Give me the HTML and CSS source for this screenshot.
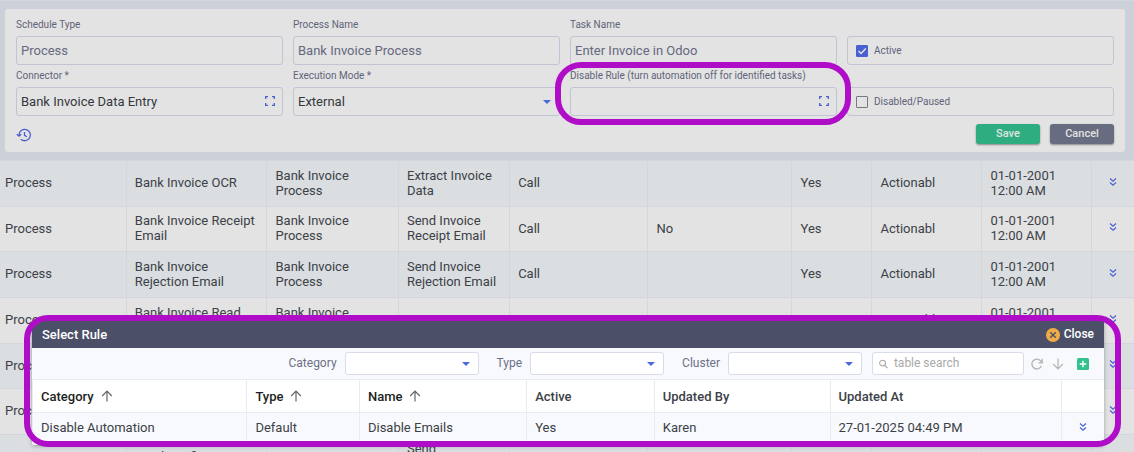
FILE: index.html
```html
<!DOCTYPE html>
<html lang="en">
<head>
<meta charset="utf-8">
<title>Schedules</title>
<link rel="stylesheet" href="styles.css">
</head>
<body>
<svg class="sprite" aria-hidden="true">
  <symbol id="down2" viewBox="0 0 10 10"><path d="M2 1.5 5 4.2 8 1.5M2 5.5 5 8.2 8 5.5" fill="none" stroke="currentColor" stroke-width="1.2"/></symbol>
  <symbol id="expand" viewBox="0 0 12 12"><path d="M1.7 4V1.7H4M8 1.7h2.3V4M10.3 8v2.3H8M4 10.3H1.7V8" fill="none" stroke="currentColor" stroke-width="1.3"/></symbol>
  <symbol id="up" viewBox="0 0 12 12"><path d="M6 11.5V1.5M1.2 6 6 1.2 10.8 6" fill="none" stroke="currentColor" stroke-width="1.2"/></symbol>
</svg>
<main class="page">
  <form class="panel">
    <div class="fields">
      <div class="field"><label for="type">Schedule Type</label><input id="type" class="box" value="Process" readonly></div>
      <div class="field"><label for="process">Process Name</label><input id="process" class="box" value="Bank Invoice Process" readonly></div>
      <div class="field"><label for="task">Task Name</label><input id="task" class="box" value="Enter Invoice in Odoo" readonly></div>
      <div class="field"><label class="box check"><input type="checkbox" checked>Active</label></div>
      <div class="field"><label for="connector">Connector *</label><div class="wrap"><input id="connector" class="box dark" value="Bank Invoice Data Entry"><button type="button" class="icon open" aria-label="Choose connector"><svg width="12" height="12"><use href="#expand"/></svg></button></div></div>
      <div class="field"><label for="mode">Execution Mode *</label><select id="mode" class="box dark drop"><option>External</option></select></div>
      <div class="field marked"><label for="rule">Disable Rule (turn automation off for identified tasks)</label><div class="wrap"><input id="rule" class="box dark"><button type="button" class="icon open" aria-label="Choose rule"><svg width="12" height="12"><use href="#expand"/></svg></button></div></div>
      <div class="field"><label class="box check"><input type="checkbox">Disabled/Paused</label></div>
    </div>
    <div class="actions">
      <button type="button" class="icon history" aria-label="History"><svg width="16" height="14" viewBox="0 0 16 14" fill="none" stroke="currentColor" stroke-width="1.3"><path d="M3 7a5.7 5.7 0 1 1 1.7 4.1M.8 6.3 3 8.2l2.2-1.9M8.5 4v3.3l2.4 1.4"/></svg></button>
      <button type="button" class="btn save">Save</button>
      <button type="button" class="btn cancel">Cancel</button>
    </div>
  </form>
  <table class="list">
    <colgroup><col class="c1"><col class="c2"><col class="c3"><col class="c4"><col class="c5"><col class="c6"><col class="c7"><col class="c8"><col class="c9"><col class="c10"></colgroup>
    <tbody>
      <tr><td>Process</td><td>Bank Invoice OCR</td><td>Bank Invoice Process</td><td>Extract Invoice Data</td><td>Call</td><td></td><td>Yes</td><td>Actionabl</td><td>01-01-2001 12:00 AM</td><td><button class="icon" aria-label="More"><svg width="10" height="10"><use href="#down2"/></svg></button></td></tr>
      <tr><td>Process</td><td>Bank Invoice Receipt Email</td><td>Bank Invoice Process</td><td>Send Invoice Receipt Email</td><td>Call</td><td>No</td><td>Yes</td><td>Actionabl</td><td>01-01-2001 12:00 AM</td><td><button class="icon" aria-label="More"><svg width="10" height="10"><use href="#down2"/></svg></button></td></tr>
      <tr><td>Process</td><td>Bank Invoice Rejection Email</td><td>Bank Invoice Process</td><td>Send Invoice Rejection Email</td><td>Call</td><td></td><td>Yes</td><td>Actionabl</td><td>01-01-2001 12:00 AM</td><td><button class="icon" aria-label="More"><svg width="10" height="10"><use href="#down2"/></svg></button></td></tr>
      <tr><td>Process</td><td>Bank Invoice Read Email</td><td>Bank Invoice Process</td><td>Scan</td><td>Document</td><td></td><td>Yes</td><td>Actionabl</td><td>01-01-2001 12:00 AM</td><td><button class="icon" aria-label="More"><svg width="10" height="10"><use href="#down2"/></svg></button></td></tr>
      <tr><td>Process</td><td></td><td></td><td></td><td></td><td></td><td></td><td></td><td></td><td><button class="icon" aria-label="More"><svg width="10" height="10"><use href="#down2"/></svg></button></td></tr>
      <tr><td>Process</td><td></td><td></td><td></td><td></td><td></td><td></td><td></td><td></td><td><button class="icon" aria-label="More"><svg width="10" height="10"><use href="#down2"/></svg></button></td></tr>
      <tr><td>Process</td><td>Send Confirmation Email</td><td></td><td>Send<br>Confirmation<br>Email</td><td></td><td></td><td></td><td></td><td>07-20-2020 12:00 AM</td><td></td></tr>
    </tbody>
  </table>
  <section class="dialog" role="dialog" aria-labelledby="dialog-title">
    <header class="titlebar"><h2 id="dialog-title">Select Rule</h2><button class="close"><svg width="14" height="14" viewBox="0 0 14 14"><circle cx="7" cy="7" r="7" fill="#f1ad45"/><path d="M4.2 4.2l5.6 5.6M9.8 4.2 4.2 9.8" stroke="#4b4f68" stroke-width="1.4"/></svg>Close</button></header>
    <div class="tools">
      <label>Category<select class="filter drop"><option></option></select></label>
      <label>Type<select class="filter drop"><option></option></select></label>
      <label>Cluster<select class="filter drop"><option></option></select></label>
      <div class="search"><svg width="10" height="10" viewBox="0 0 10 10" fill="none" stroke="#aaa" stroke-width="1.2"><circle cx="4" cy="4" r="3.3"/><path d="M6.4 6.4 9.5 9.5"/></svg><input aria-label="table search" placeholder="table search"></div>
      <div class="toolicons">
        <button class="icon grey" aria-label="Refresh"><svg width="12" height="12" viewBox="0 0 12 12"><path d="M10.3 8A4.9 4.9 0 1 1 9.5 2.7L11 4.5M11.2.8v4H7.4" fill="none" stroke="currentColor" stroke-width="1.3"/></svg></button>
        <button class="icon grey down" aria-label="Download"><svg width="12" height="12"><use href="#up"/></svg></button>
        <button class="icon add" aria-label="Add"><svg width="12" height="12" viewBox="0 0 12 12"><rect width="12" height="12" rx="1.5" fill="#33c28d"/><path d="M6 2.7v6.6M2.7 6h6.6" stroke="#fff" stroke-width="1.4"/></svg></button>
      </div>
    </div>
    <table class="rules">
      <colgroup><col class="r1"><col class="r2"><col class="r3"><col class="r4"><col class="r5"><col class="r6"><col class="r7"></colgroup>
      <thead><tr><th class="sorted">Category<svg width="12" height="12"><use href="#up"/></svg></th><th class="sorted">Type<svg width="12" height="12"><use href="#up"/></svg></th><th class="sorted">Name<svg width="12" height="12"><use href="#up"/></svg></th><th>Active</th><th>Updated By</th><th>Updated At</th><th></th></tr></thead>
      <tbody><tr><td>Disable Automation</td><td>Default</td><td>Disable Emails</td><td>Yes</td><td>Karen</td><td>27-01-2025 04:49 PM</td><td><button class="icon" aria-label="More"><svg width="10" height="10"><use href="#down2"/></svg></button></td></tr></tbody>
    </table>
    <div class="ring"></div>
  </section>
</main>
</body>
</html>
```
FILE: styles.css
```css
* { box-sizing: border-box; }
body {
  margin: 0;
  background: #cbd0d9;
  color: #3c4147;
  font: 13px/15px Roboto, sans-serif;
}
button, input, select { font: inherit; color: inherit; margin: 0; }
.sprite { position: absolute; width: 0; height: 0; }
.page {
  position: relative;
  height: 100vh;
  overflow: hidden;
  border-top: 1px solid #d4d7da;
}
.icon {
  display: inline-flex;
  padding: 0;
  border: 0;
  background: none;
  color: #4a5fd0;
}
.panel {
  margin: 8px 9px 8px 5px;
  padding: 6px 11px 8px;
  background: #e3e3e3;
  border-radius: 3px;
}
.fields {
  display: grid;
  grid-template-columns: repeat(4, 1fr);
  gap: 1px 10px;
}
.field {
  position: relative;
  display: flex;
  flex-direction: column;
  justify-content: flex-end;
  gap: 1px;
}
.field label { font-size: 10px; line-height: 20px; color: #5f6379; }
.box {
  width: 100%;
  height: 29px;
  padding: 0 4px;
  border: 1px solid #c0c4d4;
  border-radius: 3px;
  background: #e3e3e3;
  color: #65697f;
}
.dark { color: #33383c; }
.wrap { position: relative; display: flex; }
.open { position: absolute; right: 7px; top: 8px; }
.drop {
  appearance: none;
  background-image: url("data:image/svg+xml,%3Csvg xmlns='http://www.w3.org/2000/svg' width='8' height='4'%3E%3Cpath d='M0 0h8L4 4z' fill='%234a69e0'/%3E%3C/svg%3E");
  background-repeat: no-repeat;
  background-position: right 8px center;
}
.field .check {
  display: flex;
  align-items: center;
  gap: 6px;
  padding: 0 8px;
}
.check input {
  appearance: none;
  width: 12px;
  height: 12px;
  border: 1px solid #77797c;
  border-radius: 1px;
}
.check input:checked {
  border-color: #4a5fd0;
  background: #4a5fd0 url("data:image/svg+xml,%3Csvg xmlns='http://www.w3.org/2000/svg' width='10' height='10'%3E%3Cpath d='M1.5 5l2.5 2.5 4.8-5' fill='none' stroke='%23e3e3e3' stroke-width='1.4'/%3E%3C/svg%3E") center no-repeat;
}
.marked { z-index: 1; }
.marked::after, .ring {
  content: "";
  position: absolute;
  border: 6px solid #af0dc8;
  border-radius: 24px;
  pointer-events: none;
}
.marked::after { inset: -4px -14px -9px -15px; border-radius: 26px; }
.actions { display: flex; gap: 10px; margin-top: 8px; }
.history { margin-right: auto; padding-top: 2px; align-items: center; }
.btn {
  width: 64px;
  height: 20px;
  padding: 0;
  border: 0;
  border-radius: 3px;
  color: #e3e3e3;
  font-size: 11px;
  font-weight: 500;
  line-height: 18px;
  box-shadow: 0 1px 2px rgba(0, 0, 0, .4);
}
.save { background: #2eae80; }
.cancel { background: #686c80; }
table { border-collapse: separate; border-spacing: 0; table-layout: fixed; width: 100%; }
.list td {
  height: 46px;
  padding: 6px 8px 8px;
  border: solid #d3d7db;
  border-width: 1px 0 0 1px;
  background: #e3e3e3;
}
.list tr:nth-child(3n+2) td { height: 45px; }
.list tr:nth-child(odd) td { background: #dadee1; }
.list td:first-child { padding-left: 5px; border-left: 0; }
.list td:last-child, .rules td:last-child { padding: 0 0 3px; text-align: center; }
.c1 { width: 11.1%; }
.c2 { width: 12.4%; }
.c3 { width: 11.6%; }
.c4 { width: 9.8%; }
.c5 { width: 12.2%; }
.c6 { width: 12.7%; }
.c7 { width: 7.05%; }
.c8 { width: 9.7%; }
.c9 { width: 9.7%; }
.c10 { width: 3.75%; }
.dialog {
  position: absolute;
  top: 320px;
  left: 32px;
  right: 30px;
  background: #f8f9fc;
  border-radius: 3px;
  box-shadow: 0 1px 4px rgba(0, 0, 0, .3);
}
.titlebar {
  display: flex;
  align-items: center;
  justify-content: space-between;
  height: 27px;
  padding: 0 10px;
  background: #4b4f68;
  color: #fff;
}
.titlebar h2 { margin: 0; font-size: 13px; font-weight: 500; }
.close {
  display: flex;
  align-items: center;
  gap: 4px;
  padding: 0;
  border: 0;
  background: none;
  font-size: 12px;
  font-weight: 500;
}
.tools {
  display: flex;
  align-items: center;
  justify-content: flex-end;
  gap: 18px;
  height: 31px;
  padding: 0 15px;
  font-size: 12px;
  color: #6d7189;
}
.tools label { display: flex; align-items: center; gap: 8px; }
.filter, .search {
  height: 23px;
  border: 1px solid #d7dbea;
  border-radius: 3px;
  background-color: #fff;
}
.filter { width: 134px; }
.search {
  display: flex;
  align-items: center;
  gap: 6px;
  width: 152px;
  margin-left: -8px;
  padding: 0 6px;
}
.search input { width: 100%; min-width: 0; padding: 0; border: 0; outline: 0; background: none; }
.search input::placeholder { color: #a9a9a9; }
.toolicons { display: flex; align-items: center; gap: 9px; margin-left: -11px; }
.grey { color: #b3b3b3; }
.down svg { transform: rotate(180deg); }
.add { margin-left: 4px; }
.rules th, .rules td {
  padding: 0 8px;
  border: solid #e8ebf4;
  border-width: 1px 0 0 1px;
  text-align: left;
}
.rules th { height: 33px; background: #fff; font-weight: 500; }
.rules td { height: 33px; padding-bottom: 4px; }
.rules .sorted { color: #1d1f22; }
.sorted svg { margin-left: 7px; color: #666; vertical-align: -1px; }
.r1 { width: 20%; }
.r2 { width: 10.5%; }
.r3 { width: 15.6%; }
.r4 { width: 11.9%; }
.r5 { width: 16.4%; }
.r6 { width: 21.6%; }
.r7 { width: 4%; }
.ring { inset: -6px -17px -2px -8px; }
```
